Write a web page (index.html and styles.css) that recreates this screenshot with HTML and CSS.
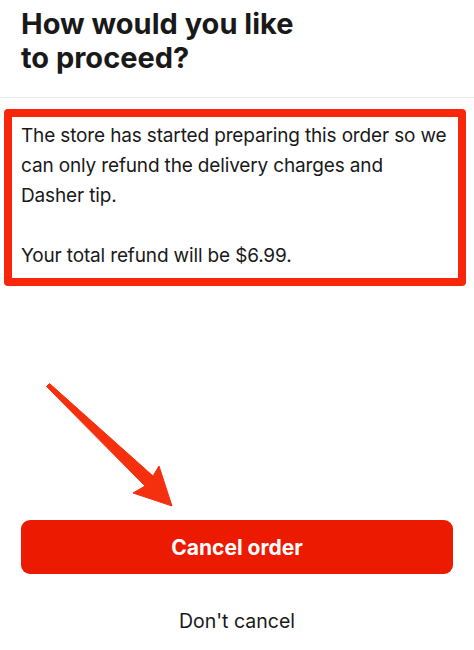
FILE: index.html
```html
<!DOCTYPE html>
<html lang="en">
<head>
  <meta charset="UTF-8">
  <meta name="viewport" content="width=device-width, initial-scale=1.0">
  <title>Cancel order</title>
  <link rel="stylesheet" href="styles.css">
</head>
<body>
  <header class="sheet-header">
    <h1>How would you like<br>to proceed?</h1>
  </header>

  <div class="notice">
    <p>The store has started preparing this order so we can only refund the delivery charges and Dasher tip.</p>
    <p>Your total refund will be $6.99.</p>
  </div>

  <div class="spacer">
    <svg class="arrow" width="140" height="130" viewBox="0 0 140 130">
      <path d="M1.5 3.5 L4.5 0.5 L108 93 L114 83 L127 123 L88 110 L100 103 Z" fill="#f5300f" stroke="#f5300f" stroke-width="1" stroke-linejoin="round"/>
    </svg>
  </div>

  <div class="actions">
    <button class="primary">Cancel order</button>
    <button class="secondary">Don't cancel</button>
  </div>
</body>
</html>
```

FILE: styles.css
```css
/* Global */
body {
  margin: 0;
  padding: 0;
  background-color: #ffffff;
  color: #191919;
  font-family: Inter, "Noto Sans", sans-serif;
}

/* Header */
.sheet-header {
  padding: 7px 21px 0;
  height: 90px;
  border-bottom: 1px solid #e6e6e6;
}

h1 {
  margin: 0;
  font-size: 29px;
  line-height: 34px;
  font-weight: 700;
}

/* Refund notice */
.notice {
  margin: 11px 8px 0 4px;
  padding: 4px 9px 7px;
  border: 8px solid #f8270c;
  border-radius: 4px;
  font-size: 19px;
  line-height: 30px;
  letter-spacing: -0.15px;
}

.notice p {
  margin: 0 0 30px;
}

.notice p:last-child {
  margin-bottom: 0;
}

/* Arrow area */
.spacer {
  position: relative;
  height: 234px;
}

.arrow {
  position: absolute;
  left: 45px;
  top: 97px;
}

/* Buttons */
.actions {
  display: flex;
  flex-direction: column;
  align-items: stretch;
  padding: 0 21px;
}

button {
  font-family: Inter, "Noto Sans", sans-serif;
  border: none;
  cursor: pointer;
}

.primary {
  height: 54px;
  border-radius: 9px;
  background-color: #eb1a00;
  color: #ffffff;
  font-size: 21px;
  font-weight: 700;
}

.secondary {
  margin-top: 34px;
  background: none;
  color: #191919;
  font-size: 19.5px;
  font-weight: 400;
}
```
